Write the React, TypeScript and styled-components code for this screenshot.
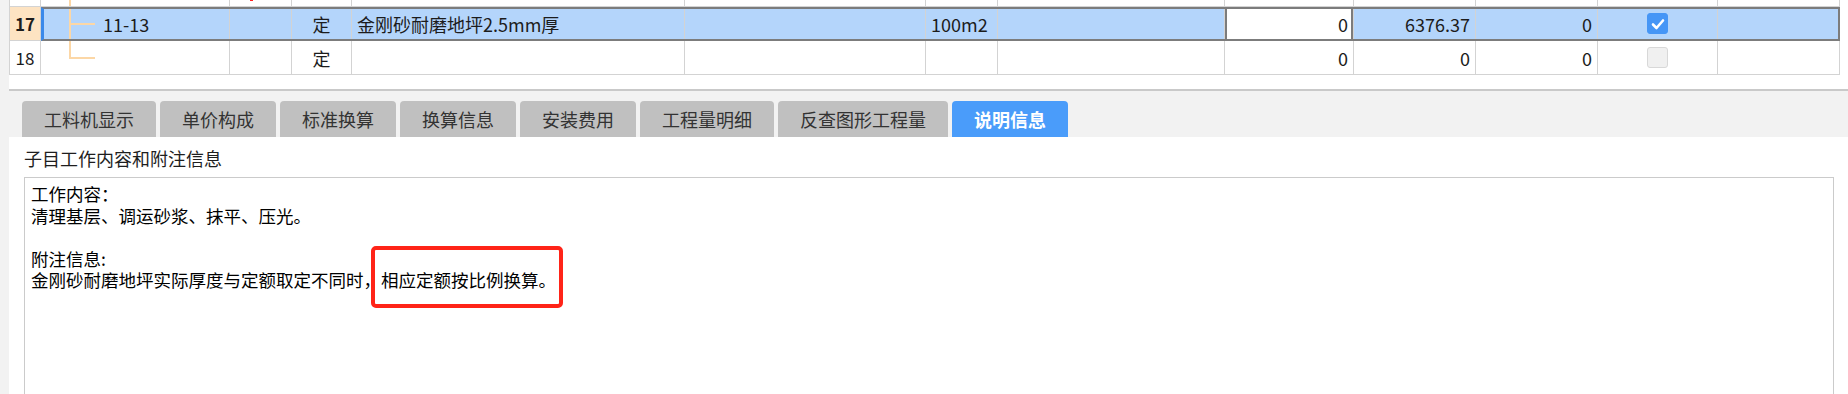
import React from "react";
import styled, { createGlobalStyle } from "styled-components";

const COLUMNS =
    "31px 189px 62px 60px 333px 241px 72px 227px 129px 122px 122px 120px 122px";

const GlobalStyle = createGlobalStyle`
    html, body {
        margin: 0;
        padding: 0;
        height: 394px;
        overflow: hidden;
        background: #f2f2f2;
    }
    body {
        font-family: "Noto Sans CJK SC", "Noto Sans", sans-serif;
    }
`;

type BranchKind = "through" | "mid" | "last";

interface RowData {
    id: number;
    num?: string;
    selected?: boolean;
    branch: BranchKind;
    code?: string;
    mark?: boolean;
    kind?: string;
    name?: string;
    unit?: string;
    qty?: string;
    price?: string;
    total?: string;
    checked?: boolean;
}

// row 16 is scrolled almost out of view, only its bottom edge shows
const rows: RowData[] = [
    { id: 16, branch: "through", mark: true, checked: false },
    {
        id: 17,
        num: "17",
        selected: true,
        branch: "mid",
        code: "11-13",
        kind: "定",
        name: "金刚砂耐磨地坪2.5mm厚",
        unit: "100m2",
        qty: "0",
        price: "6376.37",
        total: "0",
        checked: true,
    },
    {
        id: 18,
        num: "18",
        branch: "last",
        kind: "定",
        qty: "0",
        price: "0",
        total: "0",
        checked: false,
    },
];

const tabs = [
    "工料机显示",
    "单价构成",
    "标准换算",
    "换算信息",
    "安装费用",
    "工程量明细",
    "反查图形工程量",
    "说明信息",
];

export default function App() {
    return (
        <>
            <GlobalStyle />
            <Page>
                <GridArea>
                    <Table>
                        {rows.map((row) => (
                            <Row key={row.id} $selected={!!row.selected}>
                                <NumCell $selected={!!row.selected}>{row.num}</NumCell>
                                <TreeCell $selected={!!row.selected}>
                                    <Branch $kind={row.branch} />
                                    {row.code && <CodeText>{row.code}</CodeText>}
                                </TreeCell>
                                <MarkCell $selected={!!row.selected}>
                                    {row.mark && <RedMark />}
                                </MarkCell>
                                <Cell $selected={!!row.selected} $align="center">
                                    {row.kind}
                                </Cell>
                                <Cell $selected={!!row.selected}>{row.name}</Cell>
                                <Cell $selected={!!row.selected} />
                                <Cell $selected={!!row.selected}>{row.unit}</Cell>
                                <Cell $selected={!!row.selected} />
                                {row.selected ? (
                                    <EditCell>{row.qty}</EditCell>
                                ) : (
                                    <Cell $align="flex-end">{row.qty}</Cell>
                                )}
                                <Cell $selected={!!row.selected} $align="flex-end">
                                    {row.price}
                                </Cell>
                                <Cell $selected={!!row.selected} $align="flex-end">
                                    {row.total}
                                </Cell>
                                <Cell $selected={!!row.selected} $align="center">
                                    <CheckBox $checked={!!row.checked}>
                                        {row.checked && (
                                            <svg width="14" height="12" viewBox="0 0 14 12">
                                                <polyline
                                                    points="2,6.5 5.5,10 12,2.5"
                                                    fill="none"
                                                    stroke="#fff"
                                                    strokeWidth="2.6"
                                                    strokeLinecap="round"
                                                    strokeLinejoin="round"
                                                />
                                            </svg>
                                        )}
                                    </CheckBox>
                                </Cell>
                                <Cell $selected={!!row.selected} />
                            </Row>
                        ))}
                    </Table>
                </GridArea>

                <TabBar>
                    {tabs.map((t) => (
                        <Tab key={t} $active={t === "说明信息"}>
                            {t}
                        </Tab>
                    ))}
                </TabBar>

                <Panel>
                    <PanelTitle>子目工作内容和附注信息</PanelTitle>
                    <NoteBox>
                        <NoteLine>工作内容：</NoteLine>
                        <NoteLine>清理基层、调运砂浆、抹平、压光。</NoteLine>
                        <NoteLine>&nbsp;</NoteLine>
                        <NoteLine>附注信息:</NoteLine>
                        <NoteLine>
                            金刚砂耐磨地坪实际厚度与定额取定不同时，
                            <Marked>相应定额按比例换算。</Marked>
                        </NoteLine>
                    </NoteBox>
                </Panel>
            </Page>
        </>
    );
}

const Page = styled.div`
    display: flex;
    flex-direction: column;
    height: 394px;
    padding-left: 9px;
    box-sizing: border-box;
    background: #f2f2f2;
    overflow: hidden;
`;

const GridArea = styled.div`
    height: 89px;
    flex-shrink: 0;
    background: #fff;
    border-bottom: 2px solid #c9c9c9;
    overflow: hidden;
`;

const Table = styled.div`
    margin-top: -27px;
    width: fit-content;
    border-left: 1px solid #d3d3d3;
    font-size: 18px;
    color: #1c1c1c;
`;

const Row = styled.div<{ $selected: boolean }>`
    display: grid;
    grid-template-columns: ${COLUMNS};
    height: 34px;
    position: relative;

    ${(p) =>
        p.$selected &&
        `
        &::after {
            content: "";
            position: absolute;
            top: 0;
            bottom: 0;
            left: 31px;
            right: 0;
            border: 2px solid #7c7c7c;
            border-left: 3px solid #3a89ea;
            pointer-events: none;
        }
    `}
`;

const Cell = styled.div<{ $selected?: boolean; $align?: string }>`
    box-sizing: border-box;
    display: flex;
    align-items: center;
    justify-content: ${(p) => p.$align || "flex-start"};
    padding: 0 5px;
    border-right: 1px solid #d3d3d3;
    border-bottom: 1px solid #d3d3d3;
    background: ${(p) => (p.$selected ? "#b4d5fb" : "#fff")};
    white-space: nowrap;
    overflow: hidden;
    line-height: 1;
`;

const NumCell = styled(Cell)`
    justify-content: center;
    padding: 0;
    font-size: 17px;
    font-weight: ${(p) => (p.$selected ? 700 : 400)};
    background: ${(p) => (p.$selected ? "#fde3c2" : "#fff")};
`;

const TreeCell = styled(Cell)`
    padding-left: 28px;
    align-items: stretch;
`;

const Branch = styled.span<{ $kind: BranchKind }>`
    position: relative;
    width: 26px;
    flex-shrink: 0;

    &::before {
        content: "";
        position: absolute;
        left: 0;
        top: 0;
        width: 2px;
        bottom: ${(p) => (p.$kind === "last" ? "calc(50% - 1px)" : "0")};
        background: #fcd7a6;
    }

    &::after {
        content: "";
        display: ${(p) => (p.$kind === "through" ? "none" : "block")};
        position: absolute;
        left: 0;
        top: calc(50% - 1px);
        width: 26px;
        height: 2px;
        background: #fcd7a6;
    }
`;

const CodeText = styled.span`
    display: flex;
    align-items: center;
    margin-left: 8px;
`;

const MarkCell = styled(Cell)`
    align-items: flex-end;
    padding-left: 20px;
`;

const RedMark = styled.span`
    width: 3px;
    height: 3px;
    margin-bottom: 5px;
    background: #f22;
`;

const EditCell = styled(Cell)`
    justify-content: flex-end;
    background: #fff;
    box-shadow: inset 2px 0 0 #7c7c7c, inset -2px 0 0 #7c7c7c;
`;

const CheckBox = styled.span<{ $checked: boolean }>`
    box-sizing: border-box;
    width: 21px;
    height: 21px;
    border-radius: 3px;
    display: flex;
    align-items: center;
    justify-content: center;
    background: ${(p) => (p.$checked ? "#4696f6" : "#f0f0f0")};
    border: 1px solid ${(p) => (p.$checked ? "#4696f6" : "#d8d8d8")};
`;

const TabBar = styled.div`
    display: flex;
    gap: 4px;
    padding: 10px 0 0 13px;
    flex-shrink: 0;
`;

const Tab = styled.div<{ $active: boolean }>`
    height: 36px;
    padding: 0 22px;
    display: flex;
    align-items: center;
    border-radius: 4px 4px 0 0;
    font-size: 18px;
    line-height: 1;
    white-space: nowrap;
    background: ${(p) => (p.$active ? "#4a9cfa" : "#c0c0c0")};
    color: ${(p) => (p.$active ? "#fff" : "#333")};
    font-weight: ${(p) => (p.$active ? 700 : 400)};
`;

const Panel = styled.div`
    flex: 1;
    display: flex;
    flex-direction: column;
    background: #fff;
    padding: 10px 14px 0 15px;
`;

const PanelTitle = styled.div`
    font-size: 18px;
    line-height: 22px;
    color: #1e1e1e;
`;

const NoteBox = styled.div`
    flex: 1;
    margin-top: 8px;
    border: 1px solid #cbcbcb;
    border-bottom: none;
    padding: 5px 6px;
    font-size: 17.5px;
    line-height: 21.5px;
    color: #000;
`;

const NoteLine = styled.div`
    white-space: nowrap;
`;

const Marked = styled.span`
    position: relative;
    display: inline-block;

    &::after {
        content: "";
        position: absolute;
        top: -23px;
        bottom: -17px;
        left: -10px;
        right: -7px;
        border: 4px solid #ff2418;
        border-radius: 5px;
        pointer-events: none;
    }
`;
